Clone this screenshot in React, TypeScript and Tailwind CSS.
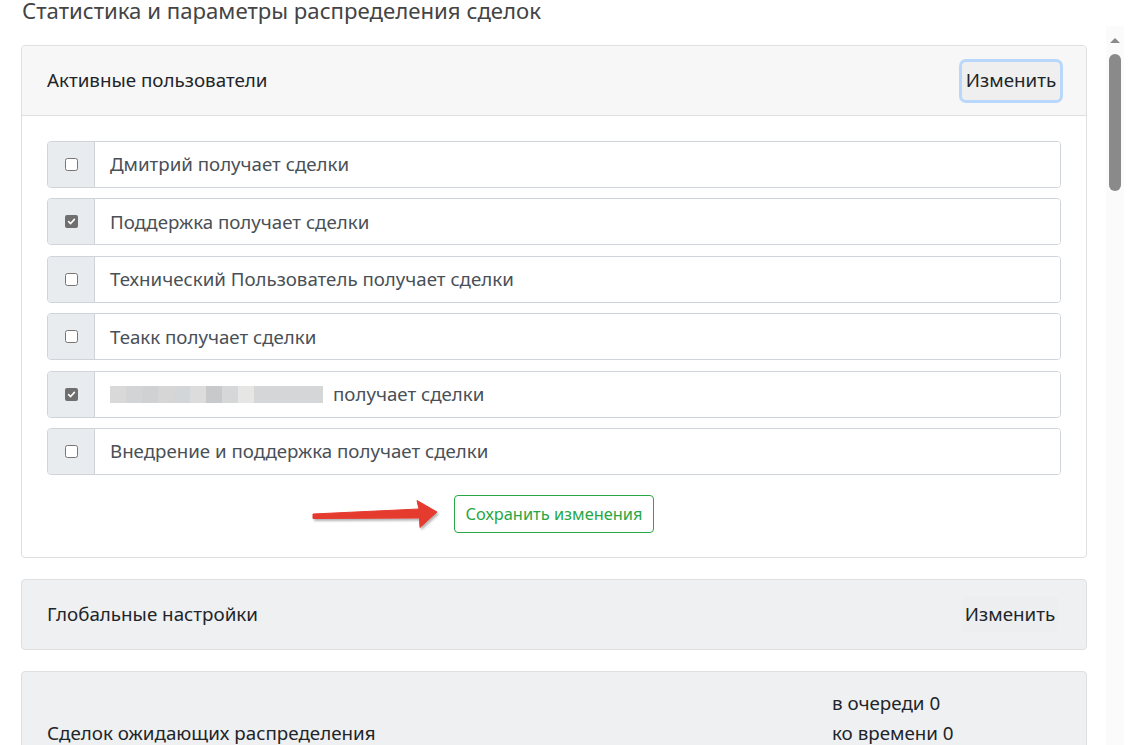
import React from "react";

const users = [
  { name: "Дмитрий получает сделки", checked: false },
  { name: "Поддержка получает сделки", checked: true },
  { name: "Технический Пользователь получает сделки", checked: false },
  { name: "Теакк получает сделки", checked: false },
  { name: "", checked: true, hidden: true },
  { name: "Внедрение и поддержка получает сделки", checked: false },
];

const blurBlocks = ["#d9d9d9", "#d2d4d6", "#cfd1d3", "#d6d6d6", "#d3d6d9", "#dcdcdc", "#c8c9cb", "#d6d7d9", "#e6e6e4"];

function Checkbox({ checked }: { checked: boolean }) {
  if (checked) {
    return (
      <div className="w-[13px] h-[13px] rounded-[2px] bg-[#6f6f6f] flex items-center justify-center">
        <svg width="9" height="9" viewBox="0 0 10 10">
          <path d="M1.8 5.2 L4 7.3 L8.2 2.6" fill="none" stroke="#fff" strokeWidth="1.8" strokeLinecap="round" strokeLinejoin="round" />
        </svg>
      </div>
    );
  }
  return <div className="w-[13px] h-[13px] rounded-[2.5px] border border-[#767676] bg-white" />;
}

function UserRow({ user }: { user: (typeof users)[number] }) {
  return (
    <div className="flex h-[47px] shrink-0 rounded-[4px] border border-[#ced4da] overflow-hidden">
      <div className="w-[47px] shrink-0 bg-[#e9ecef] border-r border-[#ced4da] flex items-center justify-center">
        <Checkbox checked={user.checked} />
      </div>
      <div className="flex-1 flex items-center pl-[15px] text-[18.7px] text-[#495057] bg-white">
        {user.hidden ? (
          <>
            <span className="flex h-[17px]">
              {blurBlocks.map((c, i) => (
                <span key={i} className="w-[16px] h-full" style={{ background: c }} />
              ))}
              <span className="w-[69px] h-full bg-[#d4d6d8]" />
            </span>
            <span className="ml-[10px]">получает сделки</span>
          </>
        ) : (
          user.name
        )}
      </div>
    </div>
  );
}

// red annotation arrow pointing at the save button
function Arrow() {
  return (
    <svg width="132" height="40" viewBox="0 0 132 40" className="absolute right-full mr-[12px] top-0">
      <defs>
        <filter id="sh" x="-10%" y="-30%" width="130%" height="180%">
          <feDropShadow dx="1.5" dy="2" stdDeviation="1.2" floodColor="#000" floodOpacity="0.3" />
        </filter>
      </defs>
      <path
        d="M3 19 L109 14 L107 5.5 L127 17 L110 32.5 L109.5 23 L3 23.5 Z"
        fill="#e53a2f"
        stroke="#e53a2f"
        strokeWidth="1"
        strokeLinejoin="round"
        filter="url(#sh)"
      />
    </svg>
  );
}

export default function App() {
  return (
    <div
      className="h-screen w-full overflow-hidden bg-white text-[#212529]"
      style={{ fontFamily: '"Noto Sans", "Open Sans", sans-serif' }}
    >
      <h1 className="pl-[22px] h-[26px] text-[22.2px] leading-[22px] text-[#444]">
        Статистика и параметры распределения сделок
      </h1>
      <div className="flex h-full">
        <div className="w-[1106px] pl-[21px] pr-[19px] pt-[19px] flex flex-col gap-[21px]">
          {/* Active users */}
          <div className="shrink-0 rounded-[4px] border border-[#dfdfdf] bg-white">
            <div className="h-[70px] bg-[#f7f7f7] border-b border-[#dfdfdf] rounded-t-[4px] flex items-center justify-between pl-[25px] pr-[26px]">
              <span className="text-[18.8px]">Активные пользователи</span>
              <button className="h-[38px] w-[98px] rounded-[4px] bg-[#efefef] text-[18.8px] text-[#212529] ring-[3px] ring-[#b8d7fb]">
                Изменить
              </button>
            </div>
            <div className="px-[25px] pt-[25px] pb-[24px] flex flex-col">
              <div className="flex flex-col gap-[10.4px]">
                {users.map((u, i) => (
                  <UserRow key={i} user={u} />
                ))}
              </div>
              <div className="flex justify-center mt-[20px]">
                <span className="relative">
                  <Arrow />
                  <button className="h-[38px] w-[200px] rounded-[4px] border border-[#28a745] text-[#28a745] text-[16.4px] bg-white">
                    Сохранить изменения
                  </button>
                </span>
              </div>
            </div>
          </div>

          {/* Global settings */}
          <div className="shrink-0 h-[71px] rounded-[4px] border border-[#dedfe1] bg-[#eff0f2] flex items-center justify-between pl-[25px] pr-[28px]">
            <span className="text-[18.8px]">Глобальные настройки</span>
            <button className="h-[36px] w-[96px] rounded-[4px] bg-[#eceef0] text-[18.8px] text-[#212529]">
              Изменить
            </button>
          </div>

          {/* Stats */}
          <div className="shrink-0 rounded-[4px] border border-[#dedfe1] bg-[#eff0f2] pl-[25px] pt-[16px] pb-[16px] flex items-center">
            <span className="w-[785px] text-[18.8px]">Сделок ожидающих распределения</span>
            <div className="flex flex-col text-[18.8px] leading-[30px]">
              <span>в очереди 0</span>
              <span>ко времени 0</span>
              <span className="h-[30px]" />
            </div>
          </div>
        </div>

        {/* Scrollbar */}
        <div className="w-[18px] h-full bg-[#fbfbfb] flex flex-col items-center">
          <div className="mt-[12px] w-0 h-0 border-l-[5px] border-r-[5px] border-b-[5px] border-l-transparent border-r-transparent border-b-[#8a8a8a]" />
          <div className="mt-[11px] w-[12px] h-[137px] rounded-full bg-[#8a8a8a]" />
        </div>
      </div>
    </div>
  );
}
